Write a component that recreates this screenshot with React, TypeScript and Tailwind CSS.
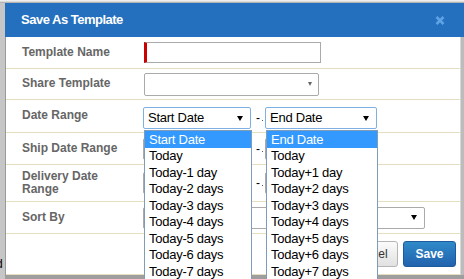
import React from "react";

const startOpts = [
  "Start Date",
  "Today",
  "Today-1 day",
  "Today-2 days",
  "Today-3 days",
  "Today-4 days",
  "Today-5 days",
  "Today-6 days",
  "Today-7 days",
];
const endOpts = [
  "End Date",
  "Today",
  "Today+1 day",
  "Today+2 days",
  "Today+3 days",
  "Today+4 days",
  "Today+5 days",
  "Today+6 days",
  "Today+7 days",
];

function BlackArrow() {
  return (
    <span className="w-0 h-0 border-l-[3.5px] border-r-[3.5px] border-t-[5px] border-l-transparent border-r-transparent border-t-black" />
  );
}

function OptionList({ options, widthClass }: { options: string[]; widthClass: string }) {
  return (
    <div
      className={`absolute left-0 top-[22px] ${widthClass} bg-white border border-[#7f9db9] z-10`}
    >
      {options.map((o, i) => (
        <div
          key={o}
          className={`h-[16.56px] flex items-center pl-[4px] text-[13px] tracking-[-0.25px] whitespace-nowrap ${
            i === 0 ? "bg-[#3399ff] text-white" : "text-black"
          }`}
        >
          {o}
        </div>
      ))}
    </div>
  );
}

function Dash() {
  return (
    <div className="w-[14px] h-[22px] flex items-center pl-[5px]">
      <span className="text-[12px] leading-none text-black">-</span>
      <span className="w-[1px] h-[1px] bg-[#555] ml-[2px] mt-[5px]" />
    </div>
  );
}

function Label({ children }: { children: React.ReactNode }) {
  return (
    <div className="w-[138px] shrink-0 pl-[16px] text-[12px] font-bold text-[#666] leading-[13.5px]">
      {children}
    </div>
  );
}

export default function App() {
  return (
    <div className="relative w-[464px] h-[279px] overflow-hidden bg-[#c6c6c6] font-['Liberation_Sans',Arial,sans-serif]">
      <div className="h-[3px] bg-[#dcdcdc] border-t border-[#eeeeee] border-b border-b-[#b3b3b3]" />
      <span className="absolute left-[-4px] top-[255px] text-[12px] text-black">d</span>
      <div className="ml-[5px] w-[459px]">
        {/* header */}
        <div className="h-[34px] bg-[#2470be] flex items-center justify-between pl-[16px] pr-[19px]">
          <span className="text-white font-bold text-[13px] tracking-[-0.5px]">Save As Template</span>
          <svg width="10" height="9" viewBox="0 0 10 9">
            <path d="M1.5 1 L8.5 8 M8.5 1 L1.5 8" stroke="#5ea3e6" strokeWidth="2.6" strokeLinecap="butt" />
          </svg>
        </div>
        {/* body */}
        <div className="flex">
          <div className="w-[455px] border-l border-[#9a9a9a] bg-white">
            {/* Template Name */}
            <div className="h-[32px] flex items-center border-b border-[#e6dfbf]">
              <Label>Template Name</Label>
              <div className="w-[177px] h-[21px] border border-[#aaaaaa] border-l-[3px] border-l-[#cc0000] bg-white" />
            </div>
            {/* Share Template */}
            <div className="h-[31px] flex items-center border-b border-[#e6dfbf]">
              <Label>Share Template</Label>
              <div className="w-[175px] h-[23px] border border-[#aaaaaa] rounded-[2px] bg-white flex items-center justify-end pr-[6px]">
                <span className="w-0 h-0 border-l-[2.5px] border-r-[2.5px] border-t-[4px] border-l-transparent border-r-transparent border-t-[#666]" />
              </div>
            </div>
            {/* Date Range */}
            <div className="h-[33px] flex border-b border-[#e6dfbf]">
              <div className="self-center">
                <Label>Date Range</Label>
              </div>
              <div className="flex ml-[-1px] mt-[7px]">
                <div className="relative w-[108px] h-[22px] border border-[#7fb0e4] rounded-[2px] bg-white flex items-center justify-between pl-[4px] pr-[7px]">
                  <span className="text-[13px] tracking-[-0.25px] text-black">Start Date</span>
                  <BlackArrow />
                  <OptionList options={startOpts} widthClass="w-[108px] -left-px" />
                </div>
                <Dash />
                <div className="relative w-[112px] h-[22px] border border-[#7fb0e4] rounded-[2px] bg-white flex items-center justify-between pl-[4px] pr-[7px]">
                  <span className="text-[13px] tracking-[-0.25px] text-black">End Date</span>
                  <BlackArrow />
                  <OptionList options={endOpts} widthClass="w-[112px] -left-px" />
                </div>
              </div>
            </div>
            {/* Ship Date Range */}
            <div className="h-[32px] flex items-center border-b border-[#e6dfbf]">
              <Label>Ship Date Range</Label>
              <div className="flex ml-[-1px]">
                <div className="w-[108px] h-[22px] border border-[#aaaaaa] rounded-[2px]" />
                <Dash />
                <div className="w-[112px] h-[22px] border border-[#aaaaaa] rounded-[2px]" />
              </div>
            </div>
            {/* Delivery Date Range */}
            <div className="h-[37px] flex items-center border-b border-[#e6dfbf]">
              <Label>
                Delivery Date
                <br />
                Range
              </Label>
              <div className="flex ml-[-1px]">
                <div className="w-[108px] h-[22px] border border-[#aaaaaa] rounded-[2px]" />
                <Dash />
                <div className="w-[112px] h-[22px] border border-[#aaaaaa] rounded-[2px]" />
              </div>
            </div>
            {/* Sort By */}
            <div className="h-[32px] flex items-center border-b border-[#e6dfbf]">
              <Label>Sort By</Label>
              <div className="ml-[-1px] w-[282px] h-[22px] border border-[#aaaaaa] rounded-[2px] bg-white flex items-center justify-end pr-[7px]">
                <BlackArrow />
              </div>
            </div>
            {/* Footer */}
            <div className="h-[41px] flex items-center justify-end gap-[5px] pr-[4px] border-b border-[#e6dfbf]">
              <button className="w-[58px] h-[26px] rounded-[3px] border border-[#b5b5b5] bg-gradient-to-b from-[#fbfbfb] to-[#e1e1e1] text-[12px] text-[#333]">
                Cancel
              </button>
              <button className="w-[53px] h-[26px] rounded-[3px] border border-[#1d5a9c] bg-gradient-to-b from-[#2f8ac8] to-[#2262ae] text-[12px] font-bold text-white">
                Save
              </button>
            </div>
          </div>
          <div className="w-[4px] bg-[#bcbcbc] border-l border-[#d8d8d8]" />
        </div>
        <div className="h-[6px] bg-[#9e9e9e]" />
      </div>
    </div>
  );
}
